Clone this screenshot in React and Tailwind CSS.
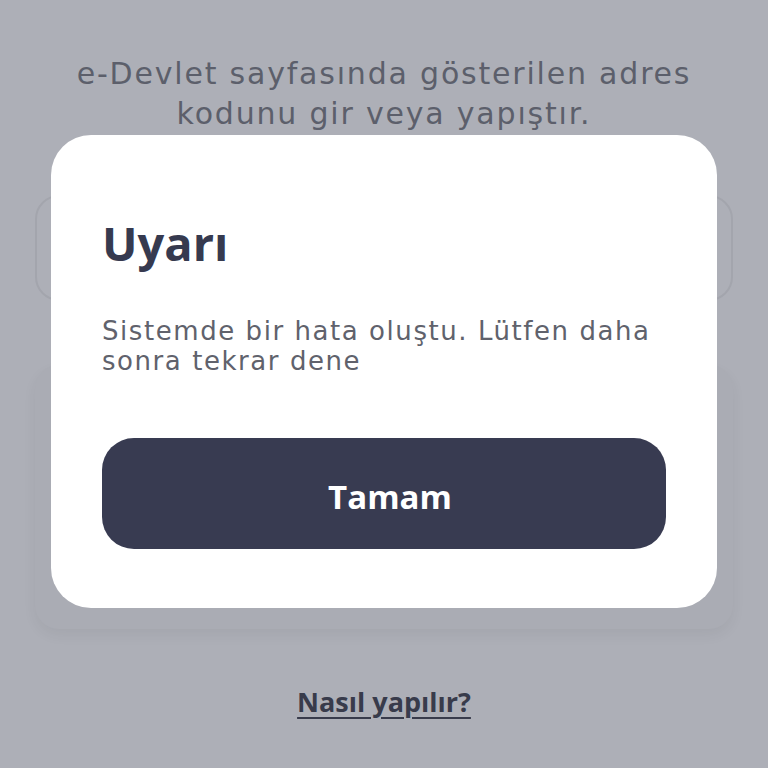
import React from 'react';

const body = { fontFamily: '"DejaVu Sans", "Noto Sans", sans-serif' };
const heavy = { fontFamily: '"Open Sans", "Noto Sans", sans-serif' };

const Backdrop = () => (
    <div className="flex flex-col px-[35px] pt-[54px]">
        <p className="text-center text-[30px] leading-[40px] tracking-[0.06em] text-[#5c5f6b]" style={body}>
            e-Devlet sayfasında gösterilen adres
            <br />
            kodunu gir veya yapıştır.
        </p>
        <div className="mt-[61px] h-[106px] rounded-[24px] border-2 border-[#a3a5ad]" />
        <div className="mt-[64px] h-[264px] rounded-[24px] bg-[#aaacb4] shadow-[0_6px_14px_rgba(0,0,0,0.05)]" />
        <div className="mt-[55px] flex justify-center">
            <span
                className="text-[27px] font-bold leading-[36px] text-[#383b4b] underline decoration-2 underline-offset-[5px]"
                style={heavy}
            >
                Nasıl yapılır?
            </span>
        </div>
    </div>
);

const AlertModal = () => (
    <div className="absolute left-[51px] top-[135px] w-[666px] rounded-[40px] bg-white px-[51px] pt-[82px] pb-[59px]">
        <h2 className="text-[47px] font-bold leading-[52px] text-[#363a4f]" style={heavy}>Uyarı</h2>
        <p className="mt-[47px] text-[26px] leading-[30px] tracking-[0.06em] text-[#60626c]" style={body}>
            Sistemde bir hata oluştu. Lütfen daha
            <br />
            sonra tekrar dene
        </p>
        <button
            className="mt-[62px] flex h-[111px] w-full items-center justify-center rounded-[32px] bg-[#383b51] pt-[6px] pl-[12px] text-[33px] font-bold text-white"
            style={heavy}
        >
            Tamam
        </button>
    </div>
);

export default function App() {
    return (
        <div className="relative h-[768px] w-full overflow-hidden bg-[#adafb7]">
            <Backdrop />
            <AlertModal />
        </div>
    );
}
